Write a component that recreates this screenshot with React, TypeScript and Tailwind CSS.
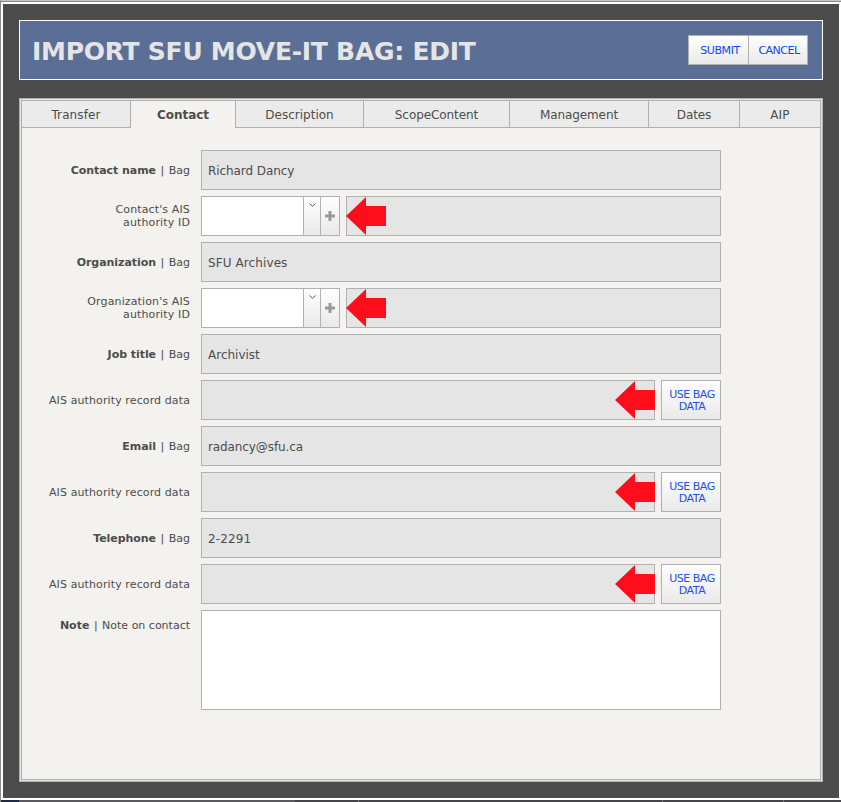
import React from "react";

const tabs = [
  { label: "Transfer", width: "w-[109px]", tracking: "tracking-[0.12px]" },
  { label: "Contact", width: "w-[105px]", tracking: "tracking-[-0.05px]", active: true },
  { label: "Description", width: "w-[128px]", tracking: "tracking-normal" },
  { label: "ScopeContent", width: "w-[146px]", tracking: "tracking-[-0.08px]" },
  { label: "Management", width: "w-[139px]", tracking: "tracking-[-0.1px]" },
  { label: "Dates", width: "w-[91px]", tracking: "tracking-[-0.1px]" },
  { label: "AIP", width: "w-[80px]", tracking: "tracking-[0.2px]" },
];

const gradient = "bg-linear-to-b from-white to-[#e9e9e9]";
const field = "border border-[#b0b0b0] bg-[#e5e5e5]";

function Arrow() {
  return (
    <svg className="h-[38px] w-10 shrink-0" viewBox="0 0 40 38">
      <path d="M0 19 20 0v9h20v20H20v9z" fill="#ff0d1b" />
    </svg>
  );
}

function Row({ label, children }: { label: React.ReactNode; children: React.ReactNode }) {
  return (
    <div className="flex h-10">
      <div className="flex w-[179px] items-center justify-end pr-[11px] text-right text-[11px] leading-[13px]">
        <div>{label}</div>
      </div>
      {children}
    </div>
  );
}

function BagRow({ name, value, tracking }: { name: string; value: string; tracking: string }) {
  return (
    <Row label={<><b className="mr-px tracking-[-0.05px]">{name}</b> | <span className="ml-px">Bag</span></>}>
      <div className={`${field} ${tracking} flex w-[520px] items-center pt-0.5 pl-1.5 text-[12px]`}>{value}</div>
    </Row>
  );
}

function AuthorityIdRow({ name }: { name: string }) {
  return (
    <Row label={<span className="tracking-[0.13px]">{name}'s AIS<br />authority ID</span>}>
      <div className="mr-1.5 flex w-[139px] border border-[#b0b0b0] bg-white">
        <div className="flex-1" />
        <button className={`${gradient} flex w-[17px] justify-center border-l border-[#b0b0b0] pt-[6px]`}>
          <svg className="h-1 w-[7px]" viewBox="0 0 7 4">
            <path d="M.5.5 3.5 3.3 6.5.5" fill="none" stroke="#555" />
          </svg>
        </button>
        <button className={`${gradient} flex w-[19px] items-center justify-center border-l border-[#b0b0b0]`}>
          <svg className="h-[10px] w-[10px]" viewBox="0 0 10 10">
            <path d="M3.5 0h3v3.5H10v3H6.5V10h-3V6.5H0v-3h3.5z" fill="#999" />
          </svg>
        </button>
      </div>
      <div className={`${field} flex w-[375px] items-center`}>
        <div className="-ml-px flex"><Arrow /></div>
      </div>
    </Row>
  );
}

function AuthorityDataRow() {
  return (
    <Row label={<span className="tracking-[0.11px]">AIS authority record data</span>}>
      <div className={`${field} mr-1.5 flex w-[454px] items-center justify-end`}>
        <div className="-mr-px flex"><Arrow /></div>
      </div>
      <button className={`${gradient} w-[60px] border border-[#b0b0b0] pt-0.5 pl-[2px] text-[11px] leading-3 tracking-[-0.5px] text-[#1a50f0]`}>
        USE BAG<br />DATA
      </button>
    </Row>
  );
}

export default function App() {
  return (
    <div className="h-[802px] w-[841px] overflow-hidden border-t border-l border-t-[#c5c5c5] border-l-[#8b8b8b] font-['DejaVu_Sans',Verdana,sans-serif] text-[#4c4c4c]">
      <div className="h-[799px] border-t border-[#8b8b8b]">
        <div className="h-[798px] border-2 border-white bg-[#4c4c4c] px-4 pt-4">
          <header className="flex h-[60px] w-[804px] items-center justify-between border border-white bg-[#5b6f96] pr-3.5 pl-3">
            <h1 className="pt-1 text-[25px] leading-8 font-bold whitespace-nowrap tracking-[-0.26px] text-[#e5e5e5]">IMPORT SFU MOVE-IT BAG: EDIT</h1>
            <div className="flex h-[30px] w-[120px] border border-[#b0b0b0] text-[11px] tracking-[-0.5px] text-[#0a45f5]">
              <button className={`${gradient} w-[60px] border-r border-[#b0b0b0] pt-0.5 pl-[3px] tracking-[-0.4px]`}>SUBMIT</button>
              <button className={`${gradient} flex-1 pt-0.5 pl-[2px]`}>CANCEL</button>
            </div>
          </header>
          <main className="mt-[18px] h-[684px] w-[804px] border border-[#b0b0b0] bg-[#e5e5e5] p-px">
            <div className="h-[680px] border border-[#b0b0b0] bg-[#f3f2ee]">
              <nav className="flex h-[27px] text-[12px]">
                {tabs.map((t) => (
                  <div
                    key={t.label}
                    className={`${t.width} ${t.tracking} flex items-center justify-center border-[#b0b0b0] not-last:border-r ${t.active ? "font-bold" : "border-b bg-[#ebebeb] pt-0.5"}`}
                  >
                    {t.label}
                  </div>
                ))}
              </nav>
              <div className="flex flex-col gap-1.5 pt-[22px]">
                <BagRow name="Contact name" value="Richard Dancy" tracking="tracking-[-0.08px]" />
                <AuthorityIdRow name="Contact" />
                <BagRow name="Organization" value="SFU Archives" tracking="tracking-[0.1px]" />
                <AuthorityIdRow name="Organization" />
                <BagRow name="Job title" value="Archivist" tracking="tracking-normal" />
                <AuthorityDataRow />
                <BagRow name="Email" value="radancy@sfu.ca" tracking="tracking-[-0.1px]" />
                <AuthorityDataRow />
                <BagRow name="Telephone" value="2-2291" tracking="tracking-[0.15px]" />
                <AuthorityDataRow />
                <div className="flex">
                  <div className="w-[179px] pt-[9px] pr-[11px] text-right text-[11px] leading-[13px]"><b className="mr-px">Note</b> | <span className="ml-px">Note on contact</span></div>
                  <div className="h-[100px] w-[520px] border border-[#b0b0b0] bg-white" />
                </div>
              </div>
            </div>
          </main>
        </div>
      </div>
      <div className="flex h-0.5 bg-[#464547]">
        <div className="w-[18px] bg-[#1f2a47]" />
        <div className="w-[276px] bg-[#5a5a5c]" />
        <div className="ml-[63px] w-px bg-[#777]" />
        <div className="ml-[303px] w-px bg-[#777]" />
        <div className="ml-[120px] w-px bg-[#777]" />
      </div>
    </div>
  );
}
